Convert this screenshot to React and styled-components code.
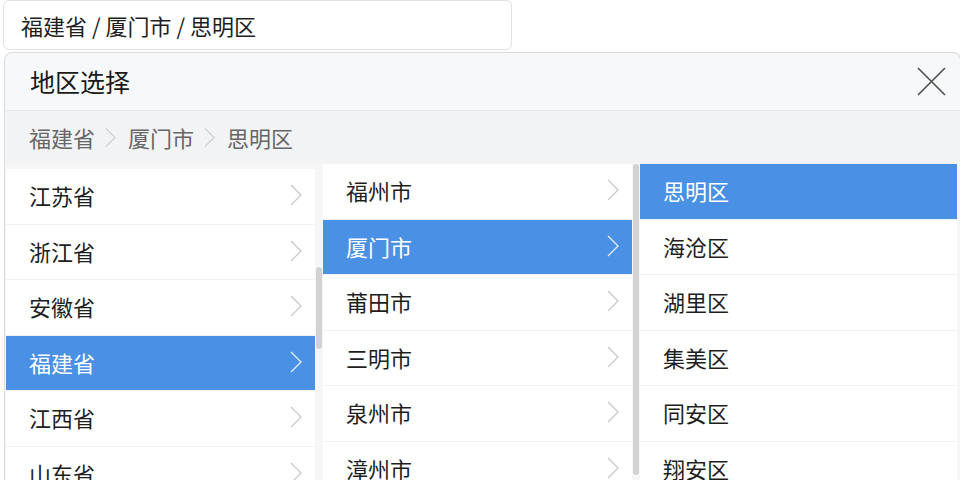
import styled, { createGlobalStyle } from "styled-components"

const GlobalStyle = createGlobalStyle`
    body {
        margin: 0;
        background: #fff;
        overflow: hidden;
        font-family: "Noto Sans CJK SC", "Noto Sans", sans-serif;
    }
`

const Page = styled.div`
    display: flex;
    flex-direction: column;
    width: 960px;
    height: 480px;
    overflow: hidden;
`

const Field = styled.div`
    display: flex;
    align-items: center;
    box-sizing: border-box;
    margin-left: 3px;
    width: 509px;
    height: 50px;
    padding-left: 17px;
    border: 1px solid #e2e2e2;
    border-radius: 6px;
    font-size: 22px;
    color: #1e1e1e;
    flex-shrink: 0;
`

const Dialog = styled.div`
    display: flex;
    flex-direction: column;
    margin: 2px 0 0 4px;
    width: 955px;
    border: 1px solid #dcdcdc;
    border-bottom: none;
    border-radius: 8px 8px 0 0;
    background: #f7f8fa;
    flex-shrink: 0;
`

const Header = styled.div`
    display: flex;
    align-items: center;
    justify-content: space-between;
    height: 57px;
    padding: 0 14px 0 25px;
    border-bottom: 1px solid #e8e9ec;
`

const Title = styled.div`
    font-size: 25px;
    color: #1a1a1a;
    padding-bottom: 2px;
`

const CloseButton = styled.button`
    display: flex;
    padding: 0;
    border: none;
    background: none;
    color: #4d4d4d;
    cursor: pointer;
`

const Trail = styled.div`
    display: flex;
    align-items: center;
    height: 52px;
    padding-left: 24px;
    background: #f2f3f5;
    font-size: 22px;
    color: #666;
`

const TrailItem = styled.span`
    display: flex;
    align-items: center;
`

const TrailSep = styled.span`
    display: flex;
    margin: 0 12px 0 10px;
    color: #cfcfcf;
`

const Columns = styled.div`
    display: flex;
    height: 330px;
    padding: 1px 0 0 1px;
    background: #f6f6f6;
`

const List = styled.div`
    display: flex;
    flex-direction: column;
    width: ${(p) => p.w}px;
    padding-top: ${(p) => p.offset || 0}px;
    overflow: hidden;
`

const Gutter = styled.div`
    display: flex;
    flex-direction: column;
    width: 8px;
    padding-left: 1px;
    box-sizing: border-box;
`

const Thumb = styled.div`
    width: 6px;
    border-radius: 3px;
    background: #d2d2d2;
`

const Row = styled.div`
    display: flex;
    align-items: center;
    justify-content: space-between;
    box-sizing: border-box;
    height: 55.5px;
    padding: 0 13px 2px 23px;
    flex-shrink: 0;
    border-bottom: 1px solid #f1f1f1;
    font-size: 22px;
    background: ${(p) => (p.active ? "#4a91e6" : "#fff")};
    color: ${(p) => (p.active ? "#fff" : "#1e1e1e")};
`

const Arrow = styled.span`
    display: flex;
    color: ${(p) => (p.active ? "#e6effb" : "#c8c8c8")};
`

function Chevron({ w = 12, h = 22 }) {
    return (
        <svg width={w} height={h} viewBox="0 0 12 22" fill="none">
            <path d="M1 1 L11 11 L1 21" stroke="currentColor" strokeWidth="1.3" />
        </svg>
    )
}

const provinces = ["江苏省", "浙江省", "安徽省", "福建省", "江西省", "山东省"]
const cities = ["福州市", "厦门市", "莆田市", "三明市", "泉州市", "漳州市"]
const districts = ["思明区", "海沧区", "湖里区", "集美区", "同安区", "翔安区"]

function Column({ items, selected, width, offset, arrows }) {
    return (
        <List w={width} offset={offset}>
            {items.map((name) => (
                <Row key={name} active={name === selected}>
                    <span>{name}</span>
                    {arrows && (
                        <Arrow active={name === selected}>
                            <Chevron />
                        </Arrow>
                    )}
                </Row>
            ))}
        </List>
    )
}

export default function App() {
    const path = ["福建省", "厦门市", "思明区"]

    return (
        <Page>
            <GlobalStyle />
            <Field>{path.join(" / ")}</Field>
            <Dialog>
                <Header>
                    <Title>地区选择</Title>
                    <CloseButton>
                        <svg width="29" height="29" viewBox="0 0 29 29">
                            <path d="M1 1 L28 28 M28 1 L1 28" stroke="currentColor" strokeWidth="1.6" />
                        </svg>
                    </CloseButton>
                </Header>
                <Trail>
                    {path.map((name, i) => (
                        <TrailItem key={name}>
                            {name}
                            {i < path.length - 1 && (
                                <TrailSep>
                                    <Chevron w={11} h={21} />
                                </TrailSep>
                            )}
                        </TrailItem>
                    ))}
                </Trail>
                <Columns>
                    <Column items={provinces} selected="福建省" width={309} offset={5} arrows />
                    <Gutter>
                        <Thumb style={{ marginTop: 103, height: 82 }} />
                    </Gutter>
                    <Column items={cities} selected="厦门市" width={309} arrows />
                    <Gutter>
                        <Thumb style={{ marginTop: 0, height: 311 }} />
                    </Gutter>
                    <Column items={districts} selected="思明区" width={317} />
                </Columns>
            </Dialog>
        </Page>
    )
}
